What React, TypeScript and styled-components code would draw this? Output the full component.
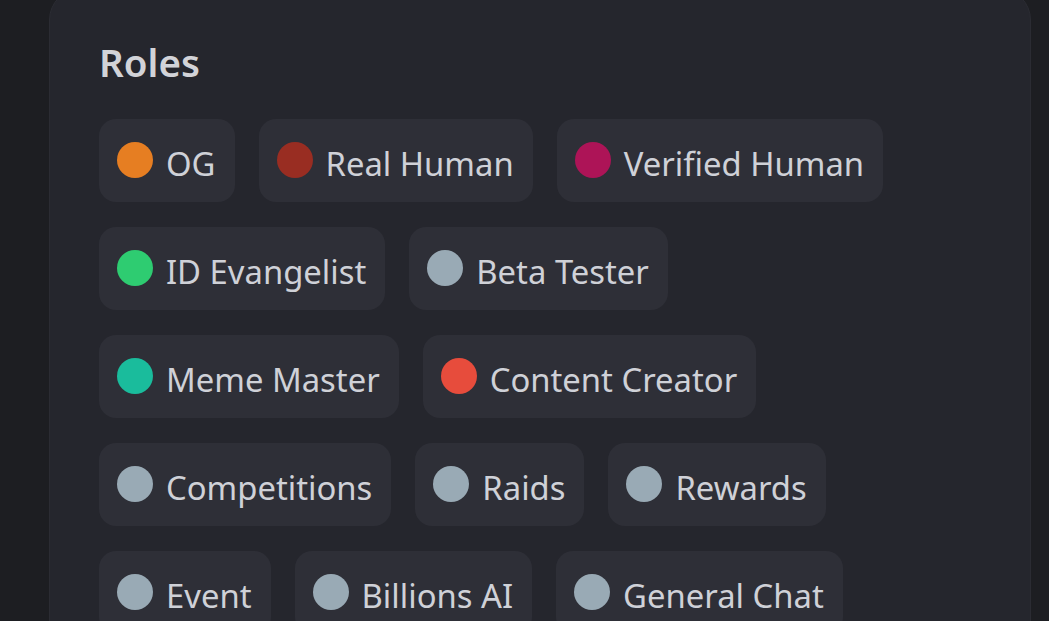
import React from "react";
import styled, { createGlobalStyle } from "styled-components";

const Global = createGlobalStyle`
  html, body { margin: 0; padding: 0; background: #1d1e22; }
  body { font-family: "Noto Sans", "Open Sans", sans-serif; overflow: hidden; }
`;

const Page = styled.div`
  width: 1049px;
  height: 621px;
  overflow: hidden;
  background: #1d1e22;
  display: flex;
  align-items: flex-start;
`;

const Card = styled.section`
  margin: -12px 0 0 49px;
  width: 982px;
  box-sizing: border-box;
  padding: 48px 49px 40px 49px;
  background: #25262d;
  border: 1px solid #2b2c33;
  border-radius: 32px;
  min-height: 700px;
`;

const Title = styled.h2`
  margin: 0 0 32px 0;
  font-size: 38.5px;
  line-height: 50px;
  font-weight: 600;
  color: #d2d3d8;
  letter-spacing: 0;
`;

const ChipList = styled.div`
  display: flex;
  flex-wrap: wrap;
  column-gap: 24px;
  row-gap: 25px;
`;

const Chip = styled.div`
  display: inline-flex;
  align-items: center;
  gap: 13px;
  height: 83px;
  box-sizing: border-box;
  padding: 0 19px 0 18px;
  border-radius: 17px;
  background: #2e2f37;
`;

const Dot = styled.span<{ $color: string }>`
  width: 36px;
  height: 36px;
  border-radius: 50%;
  background: ${(p) => p.$color};
  flex: none;
  margin-top: -2px;
`;

const Label = styled.span`
  font-size: 32.8px;
  color: #cfd1d7;
  line-height: 1;
  white-space: nowrap;
  margin-top: 8px;
`;

const roles: { name: string; color: string }[] = [
  { name: "OG", color: "#e67e22" },
  { name: "Real Human", color: "#992d22" },
  { name: "Verified Human", color: "#ad1457" },
  { name: "ID Evangelist", color: "#2ecc71" },
  { name: "Beta Tester", color: "#99aab5" },
  { name: "Meme Master", color: "#1abc9c" },
  { name: "Content Creator", color: "#e74c3c" },
  { name: "Competitions", color: "#99aab5" },
  { name: "Raids", color: "#99aab5" },
  { name: "Rewards", color: "#99aab5" },
  { name: "Event", color: "#99aab5" },
  { name: "Billions AI", color: "#99aab5" },
  { name: "General Chat", color: "#99aab5" },
];

export default function App() {
  return (
    <Page>
      <Global />
      <Card>
        <Title>Roles</Title>
        <ChipList>
          {roles.map((r) => (
            <Chip key={r.name}>
              <Dot $color={r.color} />
              <Label>{r.name}</Label>
            </Chip>
          ))}
        </ChipList>
      </Card>
    </Page>
  );
}
